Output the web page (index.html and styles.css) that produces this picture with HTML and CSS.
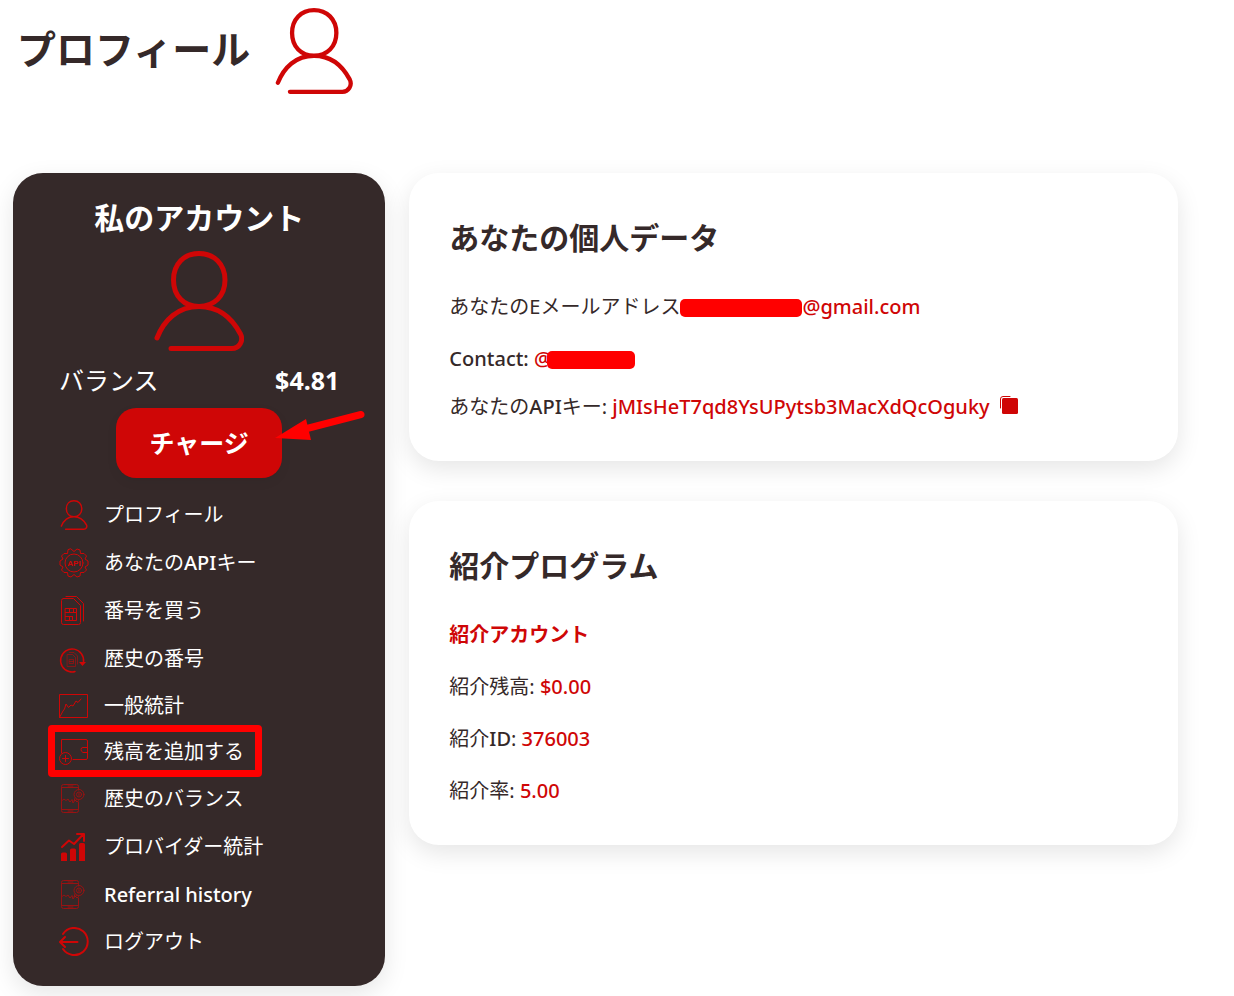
FILE: index.html
```html
<!DOCTYPE html>
<html lang="ja">
<head>
<meta charset="utf-8">
<meta name="viewport" content="width=device-width, initial-scale=1">
<title>プロフィール</title>
<link rel="stylesheet" href="styles.css">
</head>
<body>
<svg class="sprite" aria-hidden="true">
  <symbol id="person" viewBox="0 0 90 100">
    <path d="M45 2.500C60 2.500 71 13 71 29S60 55.500 45 55.500 19.500 45 19.500 29 30 2.500 45 2.500ZM3 87C10 69 24 55.500 45 55.500S78 67 86.500 83C90 90 85 97.500 78 97.500H17"/>
  </symbol>
  <symbol id="phone" viewBox="0 0 30 30">
    <path d="M19.500 6V2.500Q19.500 .5 17.500 .5H4.500Q2.500 .5 2.500 2.500V26.500Q2.500 28.500 4.500 28.500H17.500Q19.500 28.500 19.500 26.500V18M3 3.500H19M3 25.500H19M9 2H14M9 27H14M3 16.500L5 15 7 16.500 9 15 11 18 13 15.500 14 19 16 16 18 18 19.500 16.500M16 14L15 17 18 15.500"/>
    <circle cx="20" cy="10.500" r="5"/><circle cx="20" cy="10.500" r="2.500"/><path d="M20 9.500V11.500"/>
  </symbol>
</svg>

<header class="page-head">
  <h1>プロフィール</h1>
  <svg class="page-icon" aria-hidden="true"><use href="#person"/></svg>
</header>

<div class="layout">
  <aside class="sidebar">
    <h2>私のアカウント</h2>
    <svg class="avatar" aria-hidden="true"><use href="#person"/></svg>
    <div class="balance"><span>バランス</span><strong>$4.81</strong></div>
    <div class="charge">
      <button type="button">チャージ</button>
      <svg class="arrow" viewBox="0 0 92 32" aria-hidden="true"><path class="shaft" d="M30 19L86 4.500"/><path class="head" d="M0 28L31 9 36 30Z"/></svg>
    </div>
    <nav>
      <ul class="menu">
        <li><a href="#profile"><svg class="icon person" aria-hidden="true"><use href="#person"/></svg>プロフィール</a></li>
        <li><a href="#api"><svg class="icon thin" viewBox="0 0 30 30" aria-hidden="true"><path d="M12 1L15 3.500 18 1 21 2 21.500 5.500 25 5.500 27.500 8 26 11 29 13V17L26 19 27.500 22 25 24.500 21.500 24.500 21 28 18 29 15 26.500 12 29 9 28 8.500 24.500 5 24.500 2.500 22 4 19 1 17V13L4 11 2.500 8 5 5.500 8.500 5.500 9 2Z"/><circle cx="15" cy="15" r="9"/><text x="15" y="18">API</text></svg><span>あなたの<span class="latin">API</span>キー</span></a></li>
        <li><a href="#buy"><svg class="icon thin" viewBox="0 0 30 30" aria-hidden="true"><path d="M4.500 2.500H14.500L21.500 9.500V26.500Q21.500 28.500 19.500 28.500H4.500Q2.500 28.500 2.500 26.500V4.500Q2.500 2.500 4.500 2.500ZM7 .5H17.500L24.500 7.500V25M6.500 12.500H17.500V24.500H6.500ZM6.500 16.500H17.500M6.500 20.500H13.500M10.500 12.500V16.500M14.500 12.500V16.500M10.500 20.500V24.500M13.500 20.500V24.500"/></svg>番号を買う</a></li>
        <li><a href="#numbers"><svg class="icon" viewBox="0 0 30 30" aria-hidden="true"><path d="M16 27.500Q13.500 28.500 10 27.500A11.500 11.500 0 1 1 24.500 18"/><path class="solid" d="M20 18H27L23.500 22Z"/><path class="faint" d="M8.500 10.500H13.500L16.500 13.500V22.500H8.500ZM10.500 15.500H14.500V19.500H10.500ZM10.500 17.500H14.500M10.500 8.500H15L18.500 12V20"/></svg>歴史の番号</a></li>
        <li class="short"><a href="#stats"><svg class="icon thin" viewBox="0 0 30 30" aria-hidden="true"><path d="M.5 26.500V3.500H28.500V26.500H.5L4 20 5.500 18 7 13 9.500 16.500 12 14 14 15 17 10 19 11.500 22 8"/></svg>一般統計</a></li>
        <li class="short"><a class="marked" href="#topup"><svg class="icon thin" viewBox="0 0 30 30" aria-hidden="true"><path d="M2.500 16V2.500H27Q28.500 2.500 28.500 4V21Q28.500 22.500 27 22.500H14M28.500 10.500H24Q22 10.500 22 12.500T24 15.500H28.500M6.500 18.500V24.500M3.500 21.500H9.500"/><circle cx="6.500" cy="21.500" r="6"/></svg>残高を追加する</a></li>
        <li><a href="#history"><svg class="icon faint" aria-hidden="true"><use href="#phone"/></svg>歴史のバランス</a></li>
        <li><a href="#providers"><svg class="icon" viewBox="0 0 30 30" aria-hidden="true"><path class="solid" d="M2 22Q2 20.500 3.500 20.500H6.500Q8 20.500 8 22V29H2ZM11 18Q11 16.500 12.500 16.500H15.500Q17 16.500 17 18V29H11ZM20 12.500Q20 11 21.500 11H24.500Q26 11 26 12.500V29H20Z"/><path class="bold" d="M3 15L10 8.500 15 12 24 2.500M18 2H25V9"/></svg>プロバイダー統計</a></li>
        <li><a class="latin" href="#referral"><svg class="icon faint" aria-hidden="true"><use href="#phone"/></svg>Referral history</a></li>
        <li class="short"><a href="#logout"><svg class="icon" viewBox="0 0 30 30" aria-hidden="true"><path class="bold" d="M4 7A13.500 13.500 0 1 1 4 22M18.500 15H1.500M6 10L1 15 6 20"/></svg>ログアウト</a></li>
      </ul>
    </nav>
  </aside>

  <main class="content">
    <section class="card">
      <h2>あなたの個人データ</h2>
      <p>あなたのEメールアドレス<span class="mask email"></span><span class="value">@gmail.com</span></p>
      <p class="contact"><span class="latin">Contact:</span> <span class="value">@</span><span class="mask name"></span></p>
      <p>あなたの<span class="latin">API</span>キー: <span class="value">jMIsHeT7qd8YsUPytsb3MacXdQcOguky</span>
        <button class="copy" type="button" aria-label="コピー"><svg viewBox="0 0 18 18" aria-hidden="true"><path d="M.5 12V3Q.5.500 3 .5H10"/><rect x="2" y="2" width="16" height="16" rx="1.500"/></svg></button></p>
    </section>
    <section class="card">
      <h2>紹介プログラム</h2>
      <p><a class="ref" href="#account">紹介アカウント</a></p>
      <p>紹介残高: <span class="value">$0.00</span></p>
      <p>紹介<span class="latin">ID</span>: <span class="value">376003</span></p>
      <p>紹介率: <span class="value">5.00</span></p>
    </section>
  </main>
</div>
</body>
</html>
```
FILE: styles.css
```css
* { box-sizing: border-box; }

body {
  margin: 0;
  padding: 8px 56px 10px 13px;
  background: #fff;
  color: #352929;
  font: 400 20px/28px "Noto Sans", "Noto Sans CJK JP", sans-serif;
}

h1, h2, p, ul { margin: 0; padding: 0; }
a { color: inherit; text-decoration: none; }
button { border: 0; font: inherit; cursor: pointer; }
svg { fill: none; stroke: #cf0606; stroke-linecap: round; stroke-linejoin: round; }
.sprite { position: absolute; width: 0; height: 0; }
.latin { font-weight: 500; }

.page-head {
  display: flex;
  align-items: center;
  gap: 25px;
  padding-left: 4px;
  margin-bottom: 79px;
}
h1 { padding-bottom: 4px; font-size: 39px; line-height: 60px; font-weight: 700; }
.page-icon { width: 78px; height: 86px; stroke-width: 5; }

.layout {
  display: grid;
  grid-template-columns: repeat(12, 1fr);
  gap: 24px;
  align-items: start;
}

.sidebar {
  grid-column: span 4;
  padding: 20px 46px 21px;
  border-radius: 30px;
  background: #352929;
  color: #fff;
  box-shadow: 0 8px 24px rgba(0, 0, 0, .1);
}
h2 { font-size: 30px; line-height: 50px; font-weight: 700; }
.sidebar h2 { text-align: center; }
.avatar {
  display: block;
  width: 90px;
  height: 100px;
  margin: 8px auto 9px;
  stroke-width: 5;
}
.balance {
  display: flex;
  justify-content: space-between;
  font-size: 25px;
  line-height: 40px;
}
.charge {
  position: relative;
  width: 166px;
  margin: 8px auto 13px;
}
.charge button {
  display: block;
  width: 100%;
  height: 70px;
  padding: 0;
  border-radius: 20px;
  background: #cf0606;
  color: #fff;
  font-size: 25px;
  font-weight: 700;
  box-shadow: 0 4px 12px rgba(0, 0, 0, .05);
}
.arrow {
  position: absolute;
  left: 159px;
  top: 2px;
  width: 92px;
  height: 32px;
}
.arrow .shaft { stroke: #f00; stroke-width: 7; }
.arrow .head { fill: #f00; stroke: none; }

.menu { list-style: none; }
.menu li { display: flex; align-items: center; height: 48px; }
.menu li.short { height: 46px; }
.menu a {
  position: relative;
  display: flex;
  align-items: center;
  gap: 15px;
  white-space: nowrap;
}
.marked::after {
  content: "";
  position: absolute;
  inset: -12px -18px -10px -11px;
  border: 7px solid #f00;
  border-radius: 4px;
}
.icon { flex: none; width: 30px; height: 30px; stroke-width: 1.5; }
.icon.person { stroke-width: 5; }
.icon.thin { stroke-width: 1; }
.icon.faint { stroke-width: 1; opacity: .65; }
.icon .faint { stroke-width: 1; opacity: .5; }
.icon .bold { stroke-width: 2; }
.icon .solid { fill: #cf0606; stroke: none; }
.icon text {
  fill: #cf0606;
  stroke: none;
  font-family: "Liberation Sans", sans-serif;
  font-size: 8px;
  font-weight: 700;
  text-anchor: middle;
}

.content { grid-column: span 8; display: grid; gap: 40px; }
.card {
  padding: 40px;
  border-radius: 30px;
  background: #fff;
  box-shadow: 0 8px 24px rgba(0, 0, 0, .1);
}
.card h2 { margin-bottom: 30px; }
.card p { margin-bottom: 24px; }
.card p.contact { margin-bottom: 20px; }
.card p:last-child { margin-bottom: 0; }
.value { color: #cf0606; font-weight: 500; }
.ref { color: #cf0606; font-weight: 700; }

.mask {
  display: inline-block;
  height: 18px;
  border-radius: 5px;
  background: #f00;
  vertical-align: -3px;
}
.mask.email { width: 122px; }
.mask.name { width: 88px; margin-left: -5px; }

.copy {
  width: 18px;
  height: 18px;
  margin-left: 5px;
  padding: 0;
  background: none;
  vertical-align: 0;
}
.copy svg { display: block; width: 18px; height: 18px; }
.copy rect { fill: #cf0606; stroke: none; }

@media (max-width: 900px) {
  .sidebar, .content { grid-column: 1 / -1; }
}
```
